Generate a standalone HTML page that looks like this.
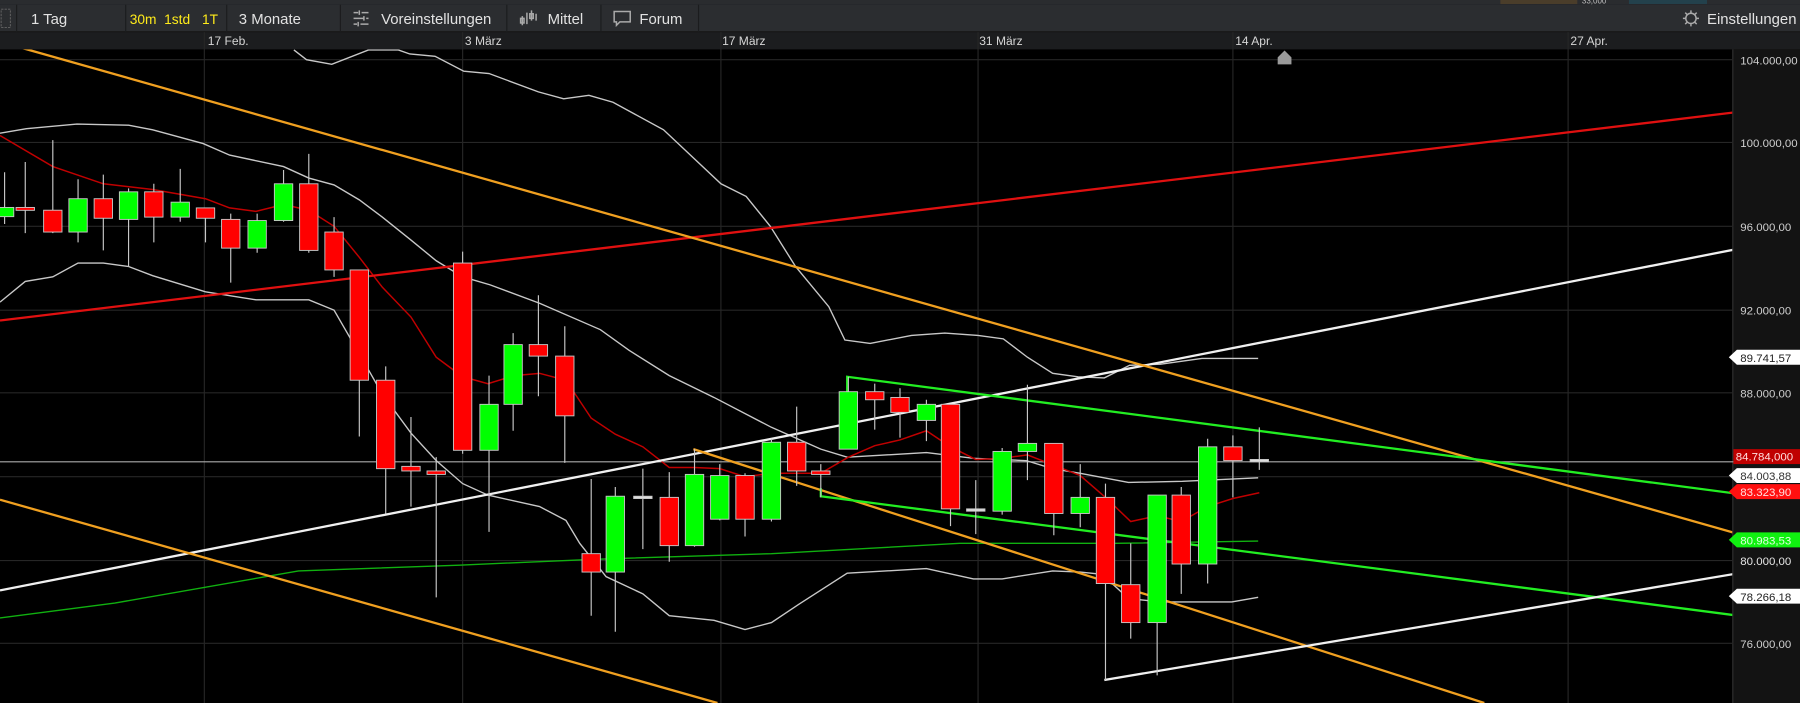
<!DOCTYPE html>
<html><head><meta charset="utf-8"><style>
html,body{margin:0;padding:0;background:#000;overflow:hidden}
svg{display:block}
text{font-family:"Liberation Sans",Arial,sans-serif}
</style></head><body>
<svg width="1800" height="703" viewBox="0 0 1568 612" preserveAspectRatio="none" xmlns="http://www.w3.org/2000/svg">
<defs><clipPath id="ch"><rect x="0" y="43" width="1509" height="569"/></clipPath></defs>
<rect x="0" y="0" width="1568" height="612" fill="#000"/>
<rect x="0" y="0" width="1568" height="4" fill="#2a2c2f"/>
<rect x="1307" y="0" width="67" height="3.5" fill="#4a3d2a"/>
<rect x="1419" y="0" width="68" height="3.5" fill="#23414c"/>
<text x="1378" y="3" font-size="7" fill="#bbb">33,000</text>
<rect x="0" y="4" width="1568" height="24" fill="#2b2d30"/>
<rect x="0" y="27" width="1568" height="1" fill="#1a1a1a"/>
<g fill="#1b1c1e">
<rect x="14" y="4" width="1" height="24"/><rect x="109" y="4" width="1" height="24"/><rect x="197" y="4" width="1" height="24"/><rect x="296" y="4" width="1" height="24"/><rect x="441" y="4" width="1" height="24"/><rect x="523" y="4" width="1" height="24"/><rect x="608" y="4" width="1" height="24"/>
</g>
<rect x="1" y="8" width="8" height="16" fill="none" stroke="#666" stroke-width="0.8" stroke-dasharray="2,1"/>
<g font-size="13" fill="#e2e2e2">
<text x="27" y="21">1 Tag</text>
<text x="113" y="21" fill="#ffeb1a" font-size="12">30m</text>
<text x="143" y="21" fill="#ffeb1a" font-size="12">1std</text>
<text x="176" y="21" fill="#ffeb1a" font-size="12">1T</text>
<text x="208" y="21">3 Monate</text>
<text x="332" y="21">Voreinstellungen</text>
<text x="477" y="21">Mittel</text>
<text x="557" y="21">Forum</text>
<text x="1487" y="21">Einstellungen</text>
</g>
<g stroke="#aaa" stroke-width="1.3" fill="none">
<path d="M308 11h4M315 11h6M308 16h9M319 16h2M308 21h3M314 21h7"/>
<path d="M313 9v4M317 14v4M312 19v4"/>
<path d="M455 14v8M459 11v10M463 9v9M467 12v6"/>
<rect x="453.5" y="16" width="3" height="4"/><rect x="461.5" y="12" width="3" height="4"/>
<path d="M535 10h14v9h-9l-3 3v-3h-2z"/>
<circle cx="1473" cy="16" r="4.5"/>
<path d="M1473 9v2.5M1473 20.5v2.5M1466 16h2.5M1477.5 16h2.5M1468 11l1.8 1.8M1476.2 19.2l1.8 1.8M1478 11l-1.8 1.8M1469.8 19.2l-1.8 1.8"/>
</g>
<rect x="0" y="28" width="1568" height="15" fill="#1c1d1f"/>
<g font-size="10.5" fill="#d6d6d6">
<text x="181" y="39">17 Feb.</text>
<text x="405" y="39">3 März</text>
<text x="629" y="39">17 März</text>
<text x="853" y="39">31 März</text>
<text x="1076" y="39">14 Apr.</text>
<text x="1368" y="39">27 Apr.</text>
</g>
<rect x="1510" y="43" width="58" height="569" fill="#131313"/>
<rect x="1509" y="43" width="1" height="569" fill="#333"/>
<g stroke="#262626" stroke-width="1">
<path d="M178 28V612M403 28V612M628 28V612M852 28V612M1074 28V612M1366 28V612"/>
<path d="M0 52H1510M0 124H1510M0 197H1510M0 270H1510M0 342H1510M0 415H1510M0 488H1510M0 560H1510"/>
</g>
<g font-size="10" fill="#cfcfcf">
<text x="1516" y="56">104.000,00</text>
<text x="1516" y="128">100.000,00</text>
<text x="1516" y="201">96.000,00</text>
<text x="1516" y="274">92.000,00</text>
<text x="1516" y="346">88.000,00</text>
<text x="1516" y="564">76.000,00</text>
</g>
<path d="M1113 56V50l6-6 6 6v6z" fill="#9a9a9a"/>
<line x1="0" y1="402" x2="1510" y2="402" stroke="#aaa" stroke-width="1"/>
<g clip-path="url(#ch)">
<g fill="none" stroke="#c8c8c8" stroke-width="1.2">
<polyline points="0,116 23,112 67,108 112,109 133,113 177,125 200,135 247,145 269,155 291,161 313,174 333,189 358,209 380,227 403,241 427,248 470,264 523,287 548,305 583,327 622,346 672,372 715,391 738,398 807,394 848,399 894,401 917,408 941,412 983,420 1030,419 1096,416"/>
<polyline points="0,263 22,245 46,241 68,229 90,229 112,232 133,240 179,254 223,261 269,261 291,270 313,308 333,343 358,377 380,401 403,421 425,431 470,441 493,453 505,473 528,502 560,517 583,536 622,540 649,548 672,542 696,526 738,499 807,495 848,504 873,504 917,497 941,498 960,500 983,521 1011,524 1073,524 1096,520"/>
<polyline points="256,43.5 267,52 289,56 321,43.5 347,43.5 357,47 379,49 404,62 426,64 469,80 491,86 513,83 534,89 578,113 628,160 650,171 671,197 693,232 722,267 736,296 758,299 794,292 823,290 852,292 874,295 895,311 917,325 939,328 962,329 984,318 1011,317 1047,312 1096,312"/>
</g>
<polyline fill="none" stroke="#10b010" stroke-width="1.2" points="0,538 100,525 260,497 400,492 515,487 544,486 672,482 836,473 972,473 1096,471"/>
<polyline fill="none" stroke="#c00000" stroke-width="1.3" points="0,118 46,145 90,160 133,165 179,173 200,181 223,184 247,178 269,183 291,197 313,224 333,250 358,276 380,311 403,328 425,334 448,327 470,325 493,331 505,349 515,364 536,378 560,389 583,407 605,407 627,408 649,415 672,412 694,412 715,412 739,398 762,388 784,383 807,375 828,389 850,400 873,399 895,396 918,405 941,414 963,433 985,454 1008,449 1029,454 1052,441 1074,434 1097,429"/>
<g fill="none" stroke-width="2">
<line x1="0" y1="279" x2="1568" y2="91" stroke="#e01010"/>
<line x1="0" y1="514" x2="1568" y2="206" stroke="#f0f0f0"/>
<line x1="20" y1="42" x2="1568" y2="480" stroke="#f0a020"/>
<line x1="0" y1="435" x2="625" y2="612" stroke="#f0a020"/>
<line x1="604" y1="391" x2="1293" y2="612" stroke="#f0a020"/>
<polyline points="738,341 738,328 1568,437" stroke="#22ee22"/>
<polyline points="715,425 715,432 1568,543" stroke="#22ee22"/>
<polyline points="962,592 1568,490" stroke="#f0f0f0"/>
</g>
</g>
<g stroke="#c8c8c8" stroke-width="1">
<path d="M4 150V195M22 141V203M46 122V203M68 156V211M90 152V218M112 164V232M134 160V211M157 147V193M179 181V211M201 186V246M224 186V220M247 148V193M269 134V220M291 189V241M313 235V380M336 319V447M358 363V441M380 398V520M403 219V395M426 327V463M447 290V375M469 257V345M492 284V403"/>
<path d="M515 417V536M536 424V550M560 408V478M583 411V489M605 391V476M627 404V453M649 412V467M672 382V454M694 354V423M715 404V433M739 328V391M762 334V374M784 338V381M807 348V384M828 352V458M850 418V465M873 390V448M895 335V418M918 386V466M941 404V459M963 421V592M985 473V556M1008 431V588M1029 424V517M1052 382V508M1074 379V433M1097 372V409"/>
</g>
<g stroke="#c8c8c8" stroke-width="0.8">
<g fill="#00ff00">
<rect x="-4" y="180.6" width="16" height="8"/>
<rect x="60" y="173" width="16" height="29"/>
<rect x="104" y="167" width="16" height="24"/>
<rect x="149" y="176" width="16" height="13"/>
<rect x="216" y="192" width="16" height="24"/>
<rect x="239" y="160" width="16" height="32"/>
<rect x="418" y="352" width="16" height="40"/>
<rect x="439" y="300" width="16" height="52"/>
<rect x="528" y="432" width="16" height="66"/>
<rect x="597" y="413" width="16" height="62"/>
<rect x="619" y="414" width="16" height="38"/>
<rect x="664" y="385" width="16" height="67"/>
<rect x="731" y="341" width="16" height="50"/>
<rect x="799" y="352" width="16" height="14"/>
<rect x="865" y="393" width="16" height="52"/>
<rect x="887" y="386" width="16" height="7"/>
<rect x="933" y="433" width="16" height="14"/>
<rect x="1000" y="431" width="16" height="111"/>
<rect x="1044" y="389" width="16" height="102"/>
</g>
<g fill="#ff0000">
<rect x="14" y="180.6" width="16" height="2.5"/>
<rect x="38" y="183" width="16" height="19"/>
<rect x="82" y="173" width="16" height="17"/>
<rect x="126" y="167" width="16" height="22"/>
<rect x="171" y="181" width="16" height="9"/>
<rect x="193" y="191" width="16" height="25"/>
<rect x="261" y="160" width="16" height="58"/>
<rect x="283" y="202" width="16" height="33"/>
<rect x="305" y="235" width="16" height="96"/>
<rect x="328" y="331" width="16" height="77"/>
<rect x="350" y="406" width="16" height="4"/>
<rect x="372" y="410" width="16" height="3"/>
<rect x="395" y="229" width="16" height="163"/>
<rect x="461" y="300" width="16" height="10"/>
<rect x="484" y="310" width="16" height="52"/>
<rect x="507" y="482" width="16" height="16"/>
<rect x="575" y="433" width="16" height="42"/>
<rect x="641" y="414" width="16" height="38"/>
<rect x="686" y="385" width="16" height="25"/>
<rect x="707" y="410" width="16" height="3"/>
<rect x="754" y="341" width="16" height="7"/>
<rect x="776" y="346" width="16" height="13"/>
<rect x="820" y="352" width="16" height="91"/>
<rect x="910" y="386" width="16" height="61"/>
<rect x="955" y="433" width="16" height="75"/>
<rect x="977" y="509" width="16" height="33"/>
<rect x="1021" y="431" width="16" height="60"/>
<rect x="1066" y="389" width="16" height="12"/>
</g>
<g fill="#ddd">
<rect x="552" y="432" width="16" height="2"/>
<rect x="842" y="443" width="16" height="2"/>
<rect x="1089" y="400" width="16" height="2"/>
</g>
</g>
<g font-size="10">
<path d="M1506 311l7-6.5h55v13h-55z" fill="#fff"/>
<text x="1516" y="315" fill="#222">89.741,57</text>
<rect x="1510" y="391" width="58" height="13" fill="#c00000"/>
<text x="1512" y="401" fill="#ffdede">84.784,000</text>
<path d="M1506 414l7-6.5h55v13h-55z" fill="#fff"/>
<text x="1516" y="418" fill="#333">84.003,88</text>
<path d="M1506 428l7-6.5h55v13h-55z" fill="#ff1010"/>
<text x="1516" y="432" fill="#ffe0e0">83.323,90</text>
<path d="M1506 470l7-6.5h55v13h-55z" fill="#10f010"/>
<text x="1516" y="474" fill="#dfffdf">80.983,53</text>
<text x="1516" y="492" fill="#e6e6e6">80.000,00</text>
<path d="M1506 519l7-6.5h55v13h-55z" fill="#fff"/>
<text x="1516" y="523" fill="#222">78.266,18</text>
</g>
</svg>
</body></html>
